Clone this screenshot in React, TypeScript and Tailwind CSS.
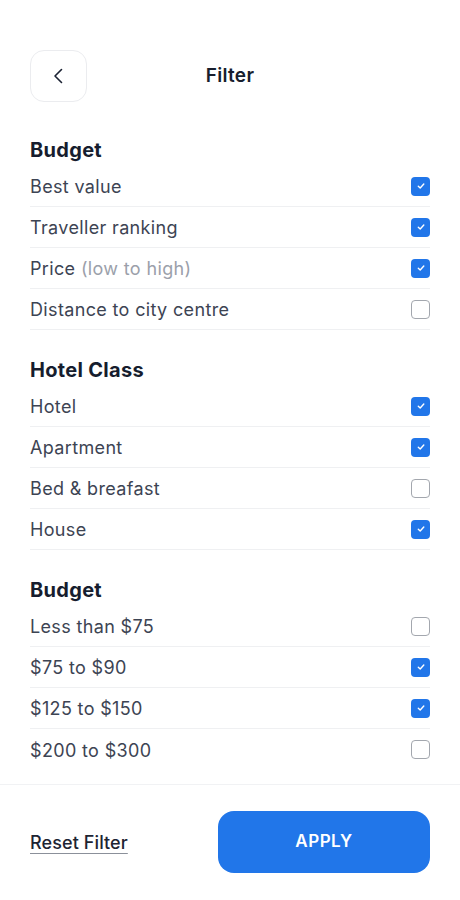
import React from "react";

type Item = { label: string; sub?: string; checked: boolean };

const sections: { title: string; items: Item[] }[] = [
  {
    title: "Budget",
    items: [
      { label: "Best value", checked: true },
      { label: "Traveller ranking", checked: true },
      { label: "Price", sub: "(low to high)", checked: true },
      { label: "Distance to city centre", checked: false },
    ],
  },
  {
    title: "Hotel Class",
    items: [
      { label: "Hotel", checked: true },
      { label: "Apartment", checked: true },
      { label: "Bed & breafast", checked: false },
      { label: "House", checked: true },
    ],
  },
  {
    title: "Budget",
    items: [
      { label: "Less than $75", checked: false },
      { label: "$75 to $90", checked: true },
      { label: "$125 to $150", checked: true },
      { label: "$200 to $300", checked: false },
    ],
  },
];

function Checkbox({ checked }: { checked: boolean }) {
  if (checked) {
    return (
      <div className="flex h-[19px] w-[19px] items-center justify-center rounded-[4px] bg-[#2176e9]">
        <svg width="10" height="10" viewBox="0 0 10 10" fill="none">
          <path d="M2.3 5.2 L4.2 7 L7.8 3" stroke="white" strokeWidth="1.4" strokeLinecap="round" strokeLinejoin="round" />
        </svg>
      </div>
    );
  }
  return <div className="h-[19px] w-[19px] rounded-[4px] border-[1.5px] border-[#a3a7ae] bg-white" />;
}

export default function App() {
  return (
    <div className="flex h-[900px] w-[460px] flex-col bg-white" style={{ fontFamily: "Inter, 'Noto Sans', sans-serif" }}>
      <div className="grid grid-cols-[57px_1fr_57px] items-center px-[30px] pt-[50px]">
        <button className="flex h-[52px] w-[57px] items-center justify-center rounded-[14px] border border-[#ebecef] bg-white">
          <svg width="20" height="20" viewBox="0 0 20 20" fill="none">
            <path d="M12.5 3.5 L6 10 L12.5 16.5" stroke="#1b2233" strokeWidth="1.6" strokeLinecap="round" strokeLinejoin="round" />
          </svg>
        </button>
        <div className="text-center text-[19px] font-semibold tracking-[0.3px] text-[#171e2e]">Filter</div>
        <div />
      </div>

      <div className="flex-1 px-[30px]">
        {sections.map((s, si) => (
          <div key={si} className={si === 0 ? "mt-[36px]" : "mt-[28px]"}>
            <div className="mb-[4px] h-[24px] text-[20px] font-bold leading-[24px] tracking-[0.3px] text-[#161d2e]">{s.title}</div>
            {s.items.map((it, ii) => {
              const last = si === sections.length - 1 && ii === s.items.length - 1;
              return (
                <div
                  key={ii}
                  className={`flex h-[41px] items-center justify-between ${last ? "" : "border-b border-[#eff0f2]"}`}
                >
                  <span className="pt-[1px] text-[18px] tracking-[0.35px] text-[#3d4453]">
                    {it.label}
                    {it.sub && <span className="text-[#9ba0aa]"> {it.sub}</span>}
                  </span>
                  <Checkbox checked={it.checked} />
                </div>
              );
            })}
          </div>
        ))}
      </div>

      <div className="flex items-center justify-between border-t border-[#f1f2f4] px-[30px] pb-[27px] pt-[26px]">
        <a className="text-[18px] font-medium tracking-[0.1px] text-[#1d2433] underline decoration-[#8b909a] underline-offset-[4px]">Reset Filter</a>
        <button className="flex h-[62px] w-[212px] items-center justify-center rounded-[16px] bg-[#2176e9] text-[17px] font-semibold tracking-[0.5px] text-white">
          APPLY
        </button>
      </div>
    </div>
  );
}
